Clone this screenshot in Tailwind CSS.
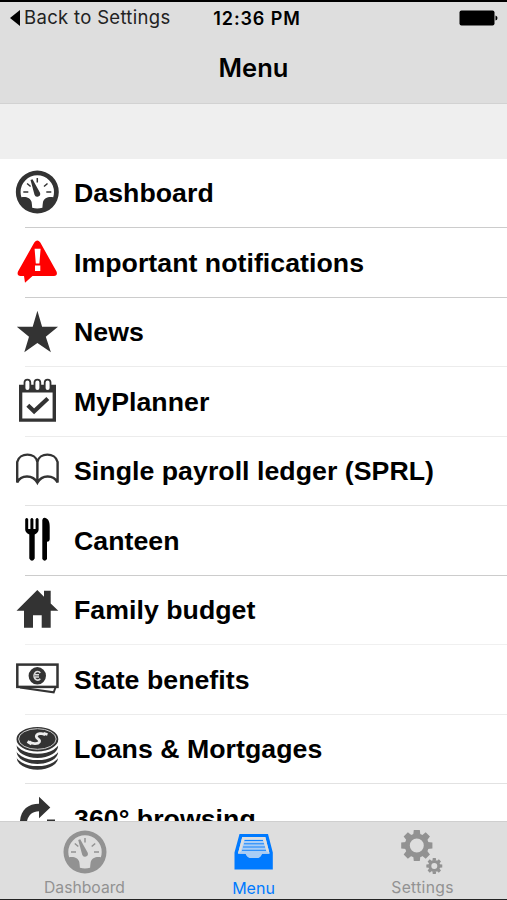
<!DOCTYPE html>
<html lang="en">
<head>
<meta charset="utf-8">
<title>Menu</title>
<script src="https://cdn.jsdelivr.net/npm/@tailwindcss/browser@4"></script>
</head>
<body class="bg-white">
<svg class="hidden">
  <symbol id="gauge" viewBox="0 0 44 44">
    <path fill="currentColor" fill-rule="evenodd" d="M22 .5a21.5 21.5 0 1 1 0 43a21.5 21.5 0 1 1 0-43zM22 5.300A16.700 16.700 0 0 0 5.300 22c0 2 .3 3.700.8 5.300C10 26 15.500 27.800 16.300 32c.3 2 .5 3.800.6 5.800q5 1.200 10.200 0c.1-2 .3-3.800.6-5.800c.8-4.200 6.300-6 10.200-4.700c.5-1.600.8-3.300.8-5.300A16.700 16.700 0 0 0 22 5.300z"/>
    <path fill="none" stroke="currentColor" stroke-width="1.500" d="M8 22h5M31 22h5M11.800 13.500l3.500 3M32.200 13.500l-3.500 3M22 8v4.500"/>
    <path fill="currentColor" d="M15.200 10l2-.8 7.500 13.500a2.900 2.900 0 1 1-5.500 2z"/>
  </symbol>
</svg>
<div class="flex h-[900px] w-[507px] flex-col overflow-hidden border-y border-[#222] border-t-2 border-t-black bg-white font-['Liberation_Sans',sans-serif]">
  <header class="h-[102px] shrink-0 border-b border-[#d2d2d2] bg-[#dedede]">
    <div class="grid h-[32px] grid-cols-[172px_1fr_165px] items-center">
      <div class="flex items-center whitespace-nowrap pl-[10px] font-[Inter,sans-serif] text-[18.500px] text-[#222]">
        <svg class="mr-[4px] h-[18px] w-[10px] shrink-0" viewBox="0 0 10 18"><path d="M10 1v16L0 9z"/></svg>
        <span class="tracking-[0.320px]">Back to Settings</span>
      </div>
      <div class="text-center font-[Inter,sans-serif] text-[18px] font-semibold tracking-[0.900px]">12:36 PM</div>
      <svg class="ml-auto mr-[9px] h-[16px] w-[39px]" viewBox="0 0 39 16"><rect x=".5" y=".5" width="35" height="15" rx="2" fill="#000"/><path d="M36.500 5.500q2 .5 2 2.500t-2 2.500z"/></svg>
    </div>
    <h1 class="pt-[16px] text-center font-[Inter,sans-serif] text-[25.500px] font-semibold leading-[36px]">Menu</h1>
  </header>
  <div class="h-[54.500px] shrink-0 bg-[#efefef]"></div>
  <main class="min-h-0 flex-1 overflow-hidden text-[26.700px] font-bold tracking-[0.040px] text-black">
    <div class="relative flex h-[69.500px] items-center">
      <svg class="h-full w-[74px] shrink-0 text-[#333]" viewBox="0 0 74 69.500"><use href="#gauge" x="15.300" y="11" width="44" height="44"/></svg>
      <span class="whitespace-nowrap">Dashboard</span><i class="absolute bottom-0 left-[25px] right-0 h-px bg-[#ccc]"></i>
    </div>
    <div class="relative flex h-[69.500px] items-center">
      <svg class="h-full w-[74px] shrink-0" viewBox="0 0 74 69.500"><path fill="#f00" d="M34.300 14.500q3-4 6 0L56.500 43.500q1.500 4-2.500 4.500H32.500L25 54.800 24 48h-3.500q-4-.5-2.500-4.500z"/><path fill="#fff" d="M34.600 20.800h6l-1.200 14.700h-3.600zM35 37.500h5.300v5.500H35z"/></svg>
      <span class="whitespace-nowrap">Important notifications</span><i class="absolute bottom-0 left-[25px] right-0 h-px bg-[#ccc]"></i>
    </div>
    <div class="relative flex h-[69.500px] items-center">
      <svg class="h-full w-[74px] shrink-0" viewBox="0 0 74 69.500"><path fill="#333" d="M37.400 12.800L42.100 28.800H58L45.800 38.700 50.900 54.300 37.400 45 24.300 54.300 29 38.700 16.800 28.800H32.700z"/></svg>
      <span class="whitespace-nowrap">News</span><i class="absolute bottom-0 left-[25px] right-0 h-px bg-[#ececec]"></i>
    </div>
    <div class="relative flex h-[69.500px] items-center">
      <svg class="h-full w-[74px] shrink-0" viewBox="0 0 74 69.500"><path fill="#333" fill-rule="evenodd" d="M19 17.700H56V54.700H19zM22.300 25.500V51.500H52.600V25.500z"/><g fill="#fff" stroke="#333" stroke-width="1.800"><rect x="24.500" y="12.700" width="5.800" height="11.300" rx="2.900"/><rect x="34.500" y="12.700" width="5.800" height="11.300" rx="2.900"/><rect x="44.700" y="12.700" width="5.800" height="11.300" rx="2.900"/></g><path fill="none" stroke="#333" stroke-width="4.200" d="M27.800 38.300l6.300 6L47.800 31.500"/></svg>
      <span class="whitespace-nowrap">MyPlanner</span><i class="absolute bottom-0 left-[25px] right-0 h-px bg-[#ececec]"></i>
    </div>
    <div class="relative flex h-[69.500px] items-center">
      <svg class="h-full w-[74px] shrink-0" viewBox="0 0 74 69.500"><path fill="none" stroke="#333" stroke-width="2.400" d="M37.400 45.800V25C35.500 15.200 19.500 15.200 17.200 25V45.500C21 37.500 33 37.500 37.400 45.800C41.800 37.500 53.500 37.500 57.600 45.500V25C55.300 15.200 39.300 15.200 37.400 25"/></svg>
      <span class="whitespace-nowrap">Single payroll ledger (SPRL)</span><i class="absolute bottom-0 left-[25px] right-0 h-px bg-[#e2e2e2]"></i>
    </div>
    <div class="relative flex h-[69.500px] items-center">
      <svg class="h-full w-[74px] shrink-0" viewBox="0 0 74 69.500"><path d="M25.200 13.200q1.500-2.500 3 0V23h2.200V13.200q1.500-2.500 3 0V23h2.200V13.200q1.500-2.500 3 0V23.500q0 3-3.900 5V52.500q-2.700 4.500-5.400 0V28.500q-4.100-2-4.100-5zM42.300 14q.5-2.500 2.500-2.300c4 1 4.900 4.500 4.900 9V33q0 2.500-2.700 2.700V53q-2.300 3.500-4.700 0z"/></svg>
      <span class="whitespace-nowrap">Canteen</span><i class="absolute bottom-0 left-[25px] right-0 h-px bg-[#ccc]"></i>
    </div>
    <div class="relative flex h-[69.500px] items-center">
      <svg class="h-full w-[74px] shrink-0" viewBox="0 0 74 69.500"><path fill="#333" d="M37.300 14L44 20.700V14.700H50.700V27.400L58.300 34.800H50.700V51.800H41.700V39.200H33V51.800H24V34.800H16.500z"/></svg>
      <span class="whitespace-nowrap">Family budget</span><i class="absolute bottom-0 left-[25px] right-0 h-px bg-[#f0f0f0]"></i>
    </div>
    <div class="relative flex h-[69.500px] items-center">
      <svg class="h-full w-[74px] shrink-0" viewBox="0 0 74 69.500"><g fill="none" stroke="#333"><rect x="17.300" y="19.600" width="40.200" height="22.300" stroke-width="2.500"/><path stroke-width="2" d="M20 42.500L53.700 47.300 55.500 42.500"/></g><circle cx="37.300" cy="30.800" r="8.700" fill="#333"/><path d="M40.300 27.900a3.600 4.300 0 1 0 0 5.800M35 29.800h4M35 32h4" fill="none" stroke="#ddd" stroke-width="1.600"/></svg>
      <span class="whitespace-nowrap">State benefits</span><i class="absolute bottom-0 left-[25px] right-0 h-px bg-[#ececec]"></i>
    </div>
    <div class="relative flex h-[69.500px] items-center">
      <svg class="h-full w-[74px] shrink-0" viewBox="0 0 74 69.500"><g fill="#333" stroke="#fff" stroke-width="2.200"><ellipse cx="37.400" cy="42.800" rx="21.800" ry="13"/><ellipse cx="37.400" cy="37" rx="21.800" ry="13"/><ellipse cx="37.400" cy="31" rx="21.800" ry="13"/><ellipse cx="37.400" cy="24.300" rx="22" ry="13.300"/></g><ellipse cx="37.400" cy="24" rx="18.800" ry="10.300" fill="none" stroke="#ccc" stroke-width="1"/><path d="M45.300 20c-3-2.500-9-1.500-9 1.500 0 2.500 4.500 2.500 3 5.500-1.500 2.500-7.500 2-10.300-.5M43.500 18.300l4 1.200M27.500 26.500l4 2.500" fill="none" stroke="#eee" stroke-width="2.800"/></svg>
      <span class="whitespace-nowrap">Loans &amp; Mortgages</span><i class="absolute bottom-0 left-[25px] right-0 h-px bg-[#e2e2e2]"></i>
    </div>
    <div class="relative flex h-[69.500px] items-center">
      <svg class="h-full w-[74px] shrink-0" viewBox="0 0 74 69.500"><path fill="#333" d="M20 42C19 27 27 19.700 39 19.700V12.800L50.300 23.500 39 34.300V27.300C31 27.300 26.500 33 26.500 42zM47 35.500h8V42h-8z"/></svg>
      <span class="whitespace-nowrap">360° browsing</span>
    </div>
  </main>
  <nav class="grid h-[78px] shrink-0 grid-cols-3 border-t border-[#cfcfcf] bg-[#dedede] font-[Inter,sans-serif] text-[16px] text-[#929292]">
    <div class="flex flex-col items-center pt-[8px]">
      <svg class="h-[44px] w-[44px]"><use href="#gauge"/></svg>
      <span class="mt-[4px] text-[15.700px] leading-[20px]">Dashboard</span>
    </div>
    <div class="flex flex-col items-center pt-[8px] text-[#007aff]">
      <svg class="h-[44px] w-[44px]" viewBox="0 0 44 44"><g transform="translate(-.5 0)"><path fill="currentColor" fill-rule="evenodd" d="M8 4H36.500L41.300 22.500V39.500H3V22.500zM10.800 7L6.500 23.500H14Q16 28 20 28H25Q29 28 30.500 23.500H38L33.800 7z"/><path fill="#dedede" d="M10.800 7H33.800L38 23.500H6.500z"/><path fill="#a9cdf5" d="M13 9.500H31.500L35.500 22.800H9z"/><path stroke="currentColor" stroke-width=".9" d="M13 10.500h18.500M12.500 13.800h20M11.500 17h22M10.500 20.300h24"/><path fill="#a9cdf5" d="M8 21.800H37V23.500H30.500Q29 28 25 28H20Q16 28 14 23.500H8z"/></g></svg>
      <span class="mt-[4px] leading-[20px]">Menu</span>
    </div>
    <div class="flex flex-col items-center pt-[8px]">
      <svg class="h-[44px] w-[44px]" viewBox="0 0 44 44">
        <g transform="translate(15.800 15.500)"><circle r="9.500" fill="none" stroke="currentColor" stroke-width="5"/><g fill="currentColor"><path id="cog" d="M-3-15.600h6l.6 5h-7.200zM-3 15.600h6l.6-5h-7.200zM-15.600-3v6l5 .6v-7.200zM15.600-3v6l-5 .6v-7.200z"/><use href="#cog" transform="rotate(45)"/></g></g>
        <g transform="translate(33.300 36)"><circle r="4.500" fill="none" stroke="currentColor" stroke-width="3"/><g fill="currentColor" transform="scale(.51)"><use href="#cog"/><use href="#cog" transform="rotate(45)"/></g></g>
      </svg>
      <span class="mt-[4px] text-[15.700px] leading-[20px] tracking-[0.300px]">Settings</span>
    </div>
  </nav>
</div>
</body>
</html>
